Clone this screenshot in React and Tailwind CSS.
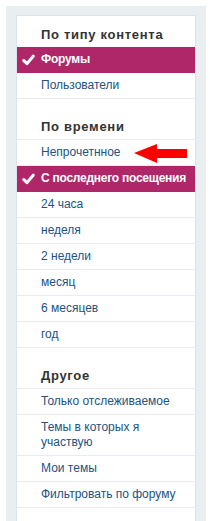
import React from "react";

const sections = [
  {
    title: "По типу контента",
    first: true,
    items: [
      { label: "Форумы", active: true },
      { label: "Пользователи" },
    ],
  },
  {
    title: "По времени",
    items: [
      { label: "Непрочетнное", arrow: true },
      { label: "С последнего посещения", active: true },
      { label: "24 часа" },
      { label: "неделя" },
      { label: "2 недели" },
      { label: "месяц" },
      { label: "6 месяцев" },
      { label: "год" },
    ],
  },
  {
    title: "Другое",
    items: [
      { label: "Только отслеживаемое" },
      { label: "Темы в которых я участвую" },
      { label: "Мои темы" },
      { label: "Фильтровать по форуму" },
    ],
  },
];

function Check() {
  return (
    <svg
      width="13"
      height="12"
      viewBox="0 0 13 12"
      className="absolute left-[5px] top-1/2 -translate-y-1/2"
    >
      <path
        d="M1.8 6.6 L5 9.6 L11.2 2.2"
        fill="none"
        stroke="#ffffff"
        strokeWidth="3"
        strokeLinecap="round"
        strokeLinejoin="round"
      />
    </svg>
  );
}

function Arrow() {
  return (
    <svg
      width="54"
      height="20"
      viewBox="0 0 54 20"
      className="absolute left-[117px] top-1/2 -translate-y-1/2"
    >
      <polygon
        points="0,10 23,1 23,6 53,6 53,15 23,15 23,20"
        fill="#ff0000"
      />
    </svg>
  );
}

export default function App() {
  return (
    <div
      className="w-[212px] h-[521px] overflow-hidden bg-white pt-[6px] px-[6px]"
      style={{ fontFamily: '"Liberation Sans", Arial, sans-serif' }}
    >
      <div className="bg-[#e9eef1] pt-[9px] px-[10px] pb-[30px]">
        <div className="bg-white border border-[#dbe4ec] pb-[30px]">
          {sections.map((s) => (
            <div key={s.title} className={s.first ? "" : "mt-[9px]"}>
              <div
                className={
                  "pl-[24px] pt-[11px] pb-[4px] leading-[16px] text-[13px] font-bold text-[#333333] tracking-[0.7px] " +
                  (s.first ? "" : "border-b border-[#e8ecf0]")
                }
              >
                {s.title}
              </div>
              {s.items.map((it) => (
                <div
                  key={it.label}
                  className={
                    "relative pl-[24px] py-[5px] leading-[15px] text-[12px] border-b " +
                    (it.active
                      ? "pr-0 whitespace-nowrap tracking-[-0.25px] bg-[#af2669] border-[#af2669] text-white font-bold"
                      : "pr-[10px] border-[#e8ecf0] text-[#22527f]")
                  }
                >
                  {it.active && <Check />}
                  {it.label}
                  {it.arrow && <Arrow />}
                </div>
              ))}
            </div>
          ))}
        </div>
      </div>
    </div>
  );
}
